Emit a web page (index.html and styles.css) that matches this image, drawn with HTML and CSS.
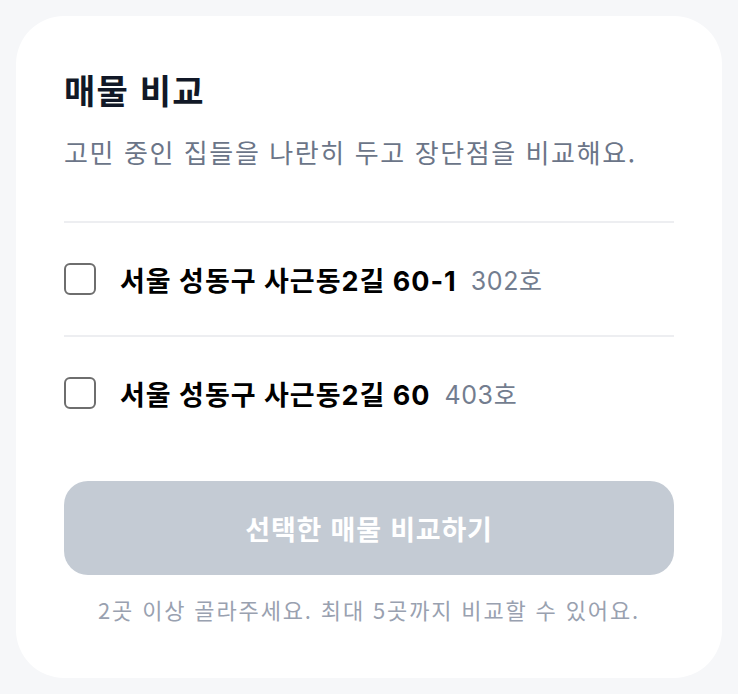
FILE: index.html
```html
<!DOCTYPE html>
<html lang="ko">
<head>
    <meta charset="UTF-8">
    <meta name="viewport" content="width=device-width, initial-scale=1.0">
    <title>매물 비교</title>
    <link rel="stylesheet" href="styles.css">
</head>
<body>

    <!-- Compare Card -->
    <div class="compare-card">
        <h2 class="card-title">매물 비교</h2>
        <p class="card-desc">고민 중인 집들을 나란히 두고 장단점을 비교해요.</p>

        <ul class="home-list">
            <li class="home-item">
                <label class="home-label">
                    <input type="checkbox" class="home-check">
                    <span class="home-addr">서울 성동구 사근동2길 60-1</span>
                    <span class="home-unit">302호</span>
                </label>
            </li>
            <li class="home-item">
                <label class="home-label">
                    <input type="checkbox" class="home-check">
                    <span class="home-addr">서울 성동구 사근동2길 60</span>
                    <span class="home-unit">403호</span>
                </label>
            </li>
        </ul>

        <button class="compare-btn" disabled>선택한 매물 비교하기</button>
        <p class="compare-hint">2곳 이상 골라주세요. 최대 5곳까지 비교할 수 있어요.</p>
    </div>

</body>
</html>
```

FILE: styles.css
```css
/* General Styling */
body {
    font-family: "Noto Sans CJK KR", "Noto Sans", sans-serif;
    background-color: #f6f7f9;
    margin: 0;
    padding: 16px;
    color: #111827;
}

/* Card */
.compare-card {
    background-color: #fff;
    border-radius: 48px;
    padding: 48px 48px 40px;
    height: 662px;
    box-sizing: border-box;
}

.card-title {
    margin: 0;
    font-size: 34px;
    font-weight: 700;
    line-height: 52px;
    letter-spacing: 1.2px;
}

.card-desc {
    margin: 18px 0 0;
    font-size: 26px;
    font-weight: 400;
    line-height: 36px;
    color: #6b7588;
    letter-spacing: 1.6px;
}

/* Home List */
.home-list {
    list-style: none;
    margin: 51px 0 0;
    padding: 0;
    border-top: 2px solid #edeef1;
}

.home-item {
    border-bottom: 2px solid #edeef1;
}

.home-item:last-child {
    border-bottom: none;
}

.home-label {
    display: flex;
    align-items: center;
    height: 112px;
    cursor: pointer;
}

.home-check {
    appearance: none;
    width: 32px;
    height: 32px;
    margin: 0 24px 0 0;
    border: 2px solid #6e6e6e;
    border-radius: 6px;
    box-sizing: border-box;
    flex-shrink: 0;
}

.home-addr {
    font-family: Inter, "Noto Sans CJK KR", sans-serif;
    font-size: 27px;
    font-weight: 700;
    color: #000;
    letter-spacing: 1px;
}

.home-unit {
    font-family: Inter, "Noto Sans CJK KR", sans-serif;
    margin-left: 14px;
    font-size: 25px;
    color: #737d8f;
    letter-spacing: 0.6px;
}

/* Compare Button */
.compare-btn {
    display: block;
    width: 100%;
    height: 94px;
    margin-top: 32px;
    border: none;
    border-radius: 24px;
    background-color: #c4cbd4;
    color: #fff;
    font-family: inherit;
    font-size: 27px;
    font-weight: 700;
    letter-spacing: 0.8px;
}

.compare-hint {
    margin: 19px 0 0;
    text-align: center;
    font-size: 22px;
    line-height: 30px;
    color: #99a1b0;
    letter-spacing: 1.85px;
}
```
